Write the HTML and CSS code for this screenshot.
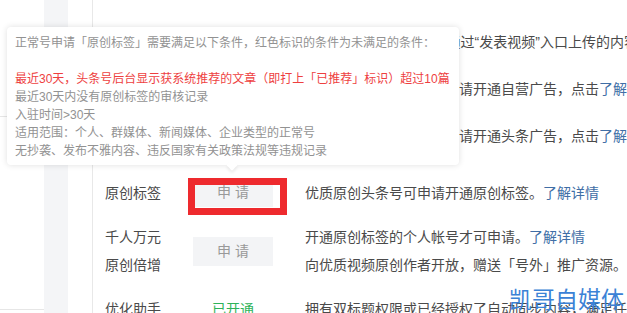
FILE: index.html
```html
<!DOCTYPE html>
<html lang="zh-CN">
<head>
<meta charset="utf-8">
<link rel="stylesheet" href="styles.css">
</head>
<body>
<div class="layout">
  <div class="sidebar">
    <div class="side-item side-first"></div>
    <div class="side-item side-second"></div>
  </div>
  <div class="gutter"></div>
  <div class="panel">
    <div class="table">
      <div class="row row-top">
        <div class="label hidden-label">视频原创</div>
        <div class="action"></div>
        <div class="desc">需入驻30天以上，仅限通过“发表视频”入口上传的内容</div>
      </div>
      <div class="row row-top">
        <div class="label hidden-label">自营广告</div>
        <div class="action"></div>
        <div class="desc">满足条件的头条号均可申请开通自营广告，点击<span class="link">了解详情</span></div>
      </div>
      <div class="row row-top">
        <div class="label hidden-label">头条广告</div>
        <div class="action"></div>
        <div class="desc">满足条件的头条号均可申请开通头条广告，点击<span class="link">了解详情</span></div>
      </div>
      <div class="row row-original">
        <div class="label">原创标签</div>
        <div class="action"><span class="btn">申 请</span></div>
        <div class="desc">优质原创头条号可申请开通原创标签。<span class="link">了解详情</span></div>
      </div>
      <div class="row">
        <div class="label"><div>千人万元</div><div>原创倍增</div></div>
        <div class="action"><span class="btn">申 请</span></div>
        <div class="desc"><div>开通原创标签的个人帐号才可申请。<span class="link">了解详情</span></div><div>向优质视频原创作者开放，赠送「号外」推广资源。</div></div>
      </div>
      <div class="row">
        <div class="label">优化助手</div>
        <div class="action"><span class="opened">已开通</span></div>
        <div class="desc">拥有双标题权限或已经授权了自动同步内容，满足任一条件即可使用</div>
      </div>
    </div>
  </div>
</div>

<div class="tooltip">
  <div>正常号申请「原创标签」需要满足以下条件，红色标识的条件为未满足的条件：</div>
  <div class="blank"></div>
  <div class="unmet">最近30天，头条号后台显示获系统推荐的文章（即打上「已推荐」标识）超过10篇</div>
  <div>最近30天内没有原创标签的审核记录</div>
  <div>入驻时间&gt;30天</div>
  <div>适用范围：个人、群媒体、新闻媒体、企业类型的正常号</div>
  <div>无抄袭、发布不雅内容、违反国家有关政策法规等违规记录</div>
</div>

<div class="highlight"></div>
<div class="watermark">凯哥自媒体</div>
</body>
</html>
```

FILE: styles.css
```css
html, body {
  margin: 0;
  padding: 0;
  background: #ffffff;
  overflow: hidden;
}

body {
  width: 627px;
  height: 313px;
  position: relative;
  font-family: "Liberation Sans", "Noto Sans CJK SC", sans-serif;
  font-size: 14px;
  color: #4a4a4a;
}

.layout {
  display: flex;
  height: 313px;
}

.sidebar {
  width: 44px;
  flex: none;
  display: flex;
  flex-direction: column;
}

.side-item {
  border-bottom: 1px solid #e6e6e6;
}

.side-first {
  height: 116px;
}

.side-second {
  height: 192px;
}

.gutter {
  width: 24px;
  flex: none;
  background: #f4f5f7;
}

.panel {
  flex: 1;
  padding-left: 24px;
  min-width: 0;
  overflow: hidden;
}

.table {
  border-left: 1px solid #e8e8e8;
  padding-left: 12px;
  padding-top: 19px;
  height: 100%;
  box-sizing: border-box;
  overflow: hidden;
}

.row {
  display: grid;
  grid-template-columns: 88px 112px 1fr;
  align-items: center;
  padding: 8px 0;
  line-height: 28px;
}

.row-top {
  padding: 9px 0 10px 0;
}

.row-original {
  margin-top: 10px;
}

.label {
  color: #4a4a4a;
  white-space: nowrap;
}

.hidden-label {
  visibility: hidden;
}

.action {
  display: flex;
  justify-content: flex-start;
}

.btn {
  display: block;
  width: 80px;
  height: 29px;
  line-height: 29px;
  text-align: center;
  background: #f3f4f6;
  color: #999999;
  font-size: 14px;
}

.opened {
  display: block;
  width: 80px;
  text-align: center;
  color: #2fb35a;
}

.desc {
  white-space: nowrap;
  color: #4a4a4a;
}

.link {
  color: #406ea6;
}

.tooltip {
  position: absolute;
  left: 7px;
  top: 27px;
  width: 452px;
  height: 138px;
  box-sizing: border-box;
  padding: 7px 8px 6px 8px;
  background: #ffffff;
  border-radius: 4px;
  box-shadow: 0 0 6px rgba(0, 0, 0, 0.13);
  font-size: 12px;
  line-height: 18px;
  color: #929292;
  white-space: nowrap;
}

.tooltip::after {
  content: "";
  position: absolute;
  left: 221px;
  bottom: -4px;
  width: 8px;
  height: 8px;
  background: #ffffff;
  transform: rotate(45deg);
  box-shadow: 2px 2px 3px rgba(0, 0, 0, 0.07);
}

.blank {
  height: 18px;
}

.unmet {
  color: #ee3f3f;
}

.highlight {
  position: absolute;
  left: 188px;
  top: 178px;
  width: 99px;
  height: 37px;
  box-sizing: border-box;
  border: 7px solid #ee2a2e;
}

.watermark {
  position: absolute;
  left: 509px;
  top: 285px;
  font-size: 23px;
  line-height: 30px;
  color: #3b82d6;
  white-space: nowrap;
}
```
